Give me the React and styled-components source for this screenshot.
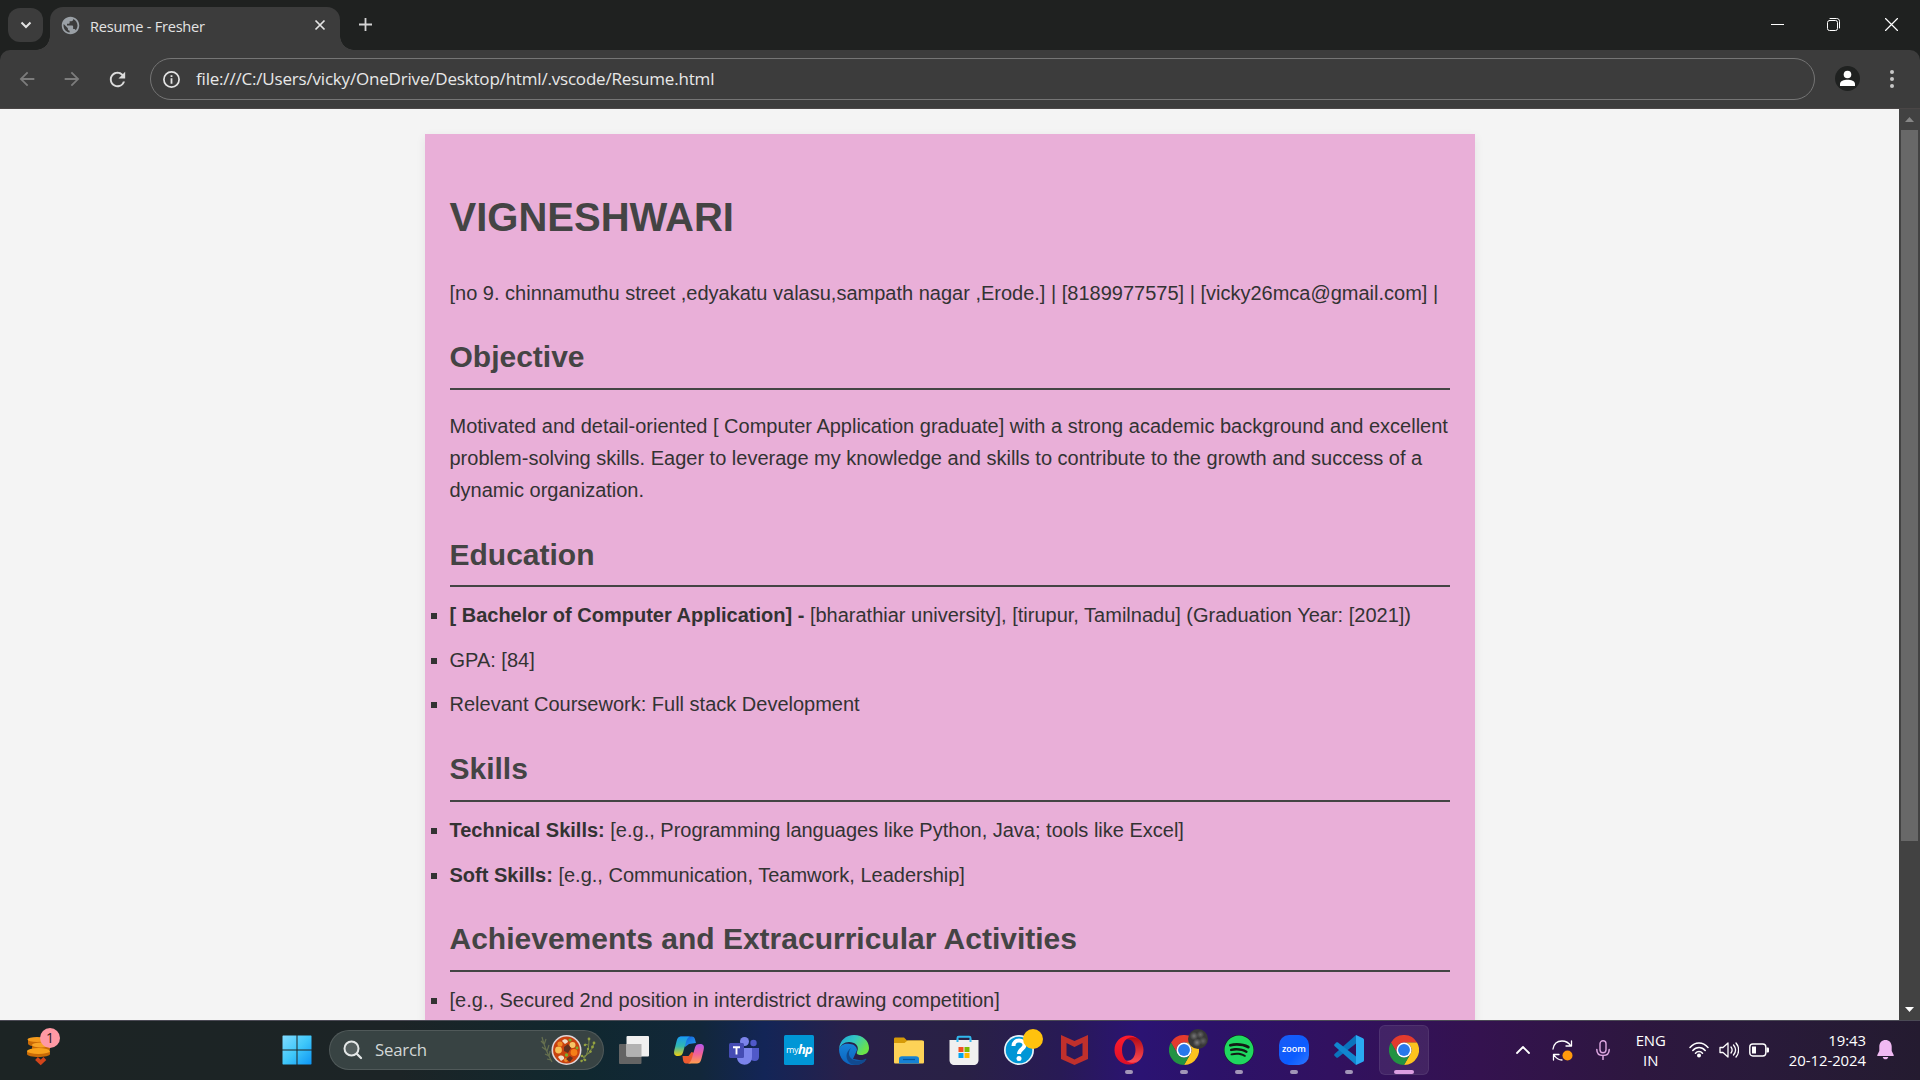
import React from "react";
import styled, { createGlobalStyle } from "styled-components";
import { FaSpotify } from "react-icons/fa";
import { MdPublic, MdRefresh, MdArrowBack, MdArrowForward } from "react-icons/md";

const UI = `"Open Sans", "Noto Sans", sans-serif`;

const GlobalStyle = createGlobalStyle`
  *, *::before, *::after { box-sizing: border-box; }
  html, body { margin: 0; padding: 0; overflow: hidden; }
  svg { display: block; flex: none; }
`;

const Screen = styled.div`
  width: 1920px;
  height: 1080px;
  display: flex;
  flex-direction: column;
  overflow: hidden;
  font-family: ${UI};
`;

/* ---------- browser chrome ---------- */

const TabStrip = styled.header`
  flex: none;
  height: 50px;
  display: flex;
  background: #1f2120;
`;

const TabSearch = styled.button`
  width: 35px;
  height: 34px;
  margin: 8px 7px 0 8px;
  padding: 0;
  border: 0;
  border-radius: 12px;
  background: #3c3c3c;
  display: flex;
  align-items: center;
  justify-content: center;
`;

const Tab = styled.div`
  position: relative;
  width: 290px;
  height: 43px;
  margin-top: 7px;
  padding: 0 13px 7px 10px;
  display: flex;
  align-items: center;
  border-radius: 13px 13px 0 0;
  background: #3c3c3c;

  &::before,
  &::after {
    content: "";
    position: absolute;
    bottom: 0;
    width: 14px;
    height: 14px;
  }
  &::before {
    left: -14px;
    background: radial-gradient(circle at 0 0, transparent 13.5px, #3c3c3c 14px);
  }
  &::after {
    right: -14px;
    background: radial-gradient(circle at 100% 0, transparent 13.5px, #3c3c3c 14px);
  }
`;

const TabTitle = styled.span`
  flex: 1;
  margin-left: 9px;
  padding-top: 1px;
  font-size: 14.6px;
  line-height: 20px;
  letter-spacing: -0.26px;
  color: #e3e3e3;
  white-space: nowrap;
`;

const NewTab = styled.div`
  margin: 18px 0 0 19px;
`;

const WindowControls = styled.div`
  margin-left: auto;
  height: 49px;
  display: flex;
`;

const WindowButton = styled.div`
  width: ${(p) => p.$width}px;
  display: flex;
  align-items: center;
  justify-content: center;
`;

const ToolbarBack = styled.div`
  flex: none;
  height: 59px;
  background: #1f2120;
`;

const Toolbar = styled.div`
  height: 59px;
  padding: 8px 19px 0 4px;
  display: flex;
  align-items: flex-start;
  border-radius: 10px 10px 0 0;
  border-bottom: 1px solid #4a4646;
  background: #3c3c3c;
`;

const NavButton = styled.div`
  width: ${(p) => (p.$active ? 47 : 45)}px;
  height: 42px;
  display: flex;
  align-items: center;
  justify-content: center;
  color: ${(p) => (p.$active ? "#dcdcdc" : "#7c7c7c")};
`;

const AddressBar = styled.div`
  width: 1665px;
  height: 42px;
  margin-left: 9px;
  padding-left: 12px;
  display: flex;
  align-items: center;
  border: 1px solid #757575;
  border-radius: 21px;
  background: #3c3c3c;
`;

const Url = styled.span`
  margin-left: 16px;
  font-size: 17px;
  line-height: 24px;
  letter-spacing: -0.19px;
  color: #e8e8e8;
  white-space: nowrap;
`;

const Profile = styled.div`
  width: 25px;
  height: 25px;
  margin: 8px 0 0 20px;
  border-radius: 50%;
  background: #1f2120;
`;

const MenuDots = styled.div`
  margin: 12px 0 0 30px;
`;

/* ---------- page ---------- */

const Viewport = styled.div`
  flex: none;
  height: 911px;
  display: flex;
  overflow: hidden;
`;

const Page = styled.main`
  width: 1899px;
  height: 911px;
  padding: 25px;
  overflow: hidden;
  background: #f4f4f4;
  color: #333;
  font: 20px/32px "Liberation Sans", Arial, sans-serif;
`;

const Sheet = styled.article`
  width: 1050px;
  height: 1100px;
  margin: 0 auto;
  padding: 25px;
  background: #e9afd8;
  box-shadow: 0 2.5px 10px rgba(0, 0, 0, 0.07);
`;

const Name = styled.h1`
  margin: 26px 0 27.6px;
  font-size: 40px;
  line-height: 64px;
  font-weight: 700;
  color: #444;
`;

const Heading = styled.h2`
  margin: 24.9px 0 12.5px;
  padding-bottom: 6.25px;
  border-bottom: 2px solid #444;
  font-size: 30px;
  line-height: 48px;
  font-weight: 700;
  color: #444;
`;

const Text = styled.p`
  margin: 20px 0;
`;

const Items = styled.ul`
  margin: 0;
  padding: 0;
  list-style: square;
`;

const Item = styled.li`
  margin-bottom: 12.5px;
  white-space: nowrap;
`;

const Scrollbar = styled.div`
  width: 21px;
  height: 911px;
  display: flex;
  flex-direction: column;
  align-items: center;
  justify-content: space-between;
  background: #424242;
`;

const ScrollArrow = styled.div`
  height: 21px;
  display: flex;
  align-items: center;
`;

const Thumb = styled.div`
  width: 17px;
  height: 711px;
  margin-bottom: auto;
  background: #686868;
`;

/* ---------- taskbar ---------- */

const Taskbar = styled.footer`
  flex: none;
  height: 60px;
  display: flex;
  align-items: center;
  box-shadow: inset 0 1px #4b4a55;
  background: linear-gradient(
    90deg,
    #1c2424 0,
    #1c2426 400px,
    #10282f 580px,
    #12273a 700px,
    #132557 765px,
    #29204a 850px,
    #292145 960px,
    #281a55 1060px,
    #2b1373 1140px,
    #2c1269 1210px,
    #311160 1330px,
    #34124f 1480px,
    #2d173f 1640px,
    #291a3a 1760px,
    #241b30 1920px
  );
`;

const Widget = styled.div`
  position: relative;
  width: 40px;
  height: 40px;
  margin-left: 22px;
`;

const Count = styled.span`
  position: absolute;
  left: 18px;
  top: -2px;
  width: 20px;
  height: 20px;
  border-radius: 50%;
  background: #ff99a4;
  color: #2a1a1c;
  font-size: 14px;
  line-height: 20px;
  text-align: center;
`;

const Slot = styled.div`
  position: relative;
  width: 55px;
  height: 60px;
  margin-left: ${(p) => p.$gap || 0}px;
  display: flex;
  align-items: center;
  justify-content: center;
`;

const Tile = styled.div`
  width: 50px;
  height: 50px;
  display: flex;
  align-items: center;
  justify-content: center;
  border-radius: 6px;
  border: 1px solid ${(p) => (p.$active ? "rgba(255,255,255,0.07)" : "transparent")};
  background: ${(p) => (p.$active ? "rgba(255,255,255,0.08)" : "transparent")};
`;

const Running = styled.span`
  position: absolute;
  left: 50%;
  bottom: 6px;
  width: ${(p) => (p.$active ? 20 : 8)}px;
  height: 4px;
  transform: translateX(-50%);
  border-radius: 2px;
  background: ${(p) => (p.$active ? "#dc9ee2" : "#a296b8")};
`;

const Dot = styled.span`
  position: absolute;
  left: 31px;
  top: 9px;
  width: 20px;
  height: 20px;
  border-radius: 50%;
  background: ${(p) => p.$fill};
`;

const SearchBox = styled.div`
  width: 275px;
  height: 40px;
  margin-left: 4.5px;
  padding: 0 6px 0 13px;
  display: flex;
  align-items: center;
  border: 1px solid rgba(255, 255, 255, 0.12);
  border-radius: 20px;
  background: #384343;
`;

const SearchLabel = styled.span`
  flex: 1;
  margin-left: 12px;
  font-size: 16.8px;
  line-height: 24px;
  letter-spacing: -0.2px;
  color: #d3d7d7;
`;

const AppSlots = styled.div`
  display: flex;
  margin-left: 2.5px;
`;

const Tray = styled.div`
  margin-left: auto;
  height: 59px;
  padding-right: 26px;
  display: flex;
  align-items: center;
  color: #fff;
`;

const TrayIcon = styled.div`
  margin-right: ${(p) => p.$gap || 0}px;
`;

const TrayText = styled.div`
  margin-right: ${(p) => p.$gap}px;
  text-align: ${(p) => p.$align};
  font-size: 14.9px;
  line-height: 20px;
  letter-spacing: -0.05px;
  white-space: nowrap;
`;

/* ---------- drawings ---------- */

const Chrome = () => (
  <svg width="30" height="30" viewBox="0 0 48 48">
    <path fill="#e33b2e" d="M24 12H44.8A24 24 0 0 0 3.2 12L13.6 30A12 12 0 0 1 24 12Z" />
    <path fill="#fcc31e" d="M34.4 30L24 48A24 24 0 0 0 44.8 12H24A12 12 0 0 1 34.4 30Z" />
    <path fill="#229342" d="M13.6 30L3.2 12A24 24 0 0 0 24 48L34.4 30A12 12 0 0 1 13.6 30Z" />
    <circle cx="24" cy="24" r="12" fill="#fff" />
    <circle cx="24" cy="24" r="9.5" fill="#2878ea" />
  </svg>
);

const Coins = () => (
  <svg width="40" height="40" viewBox="0 0 40 40">
    <path fill="#c96a06" d="M6 9.500v4c0 4 17 4 17 0v-4zM10 15v4c0 4 18 4 18 0v-4zM5 21v3c0 4 23 4 23 0v-3z" />
    <ellipse cx="15" cy="9.500" rx="9.500" ry="2.600" fill="#f59b1c" />
    <ellipse cx="19" cy="15" rx="9" ry="2.600" fill="#f7a325" />
    <ellipse cx="16.500" cy="21" rx="11.500" ry="3" fill="#f8a11b" />
    <path fill="none" stroke="#d2451b" strokeWidth="4" d="M14.500 28.500l4.200 4 4.200-4" />
  </svg>
);

const WindowsLogo = () => (
  <svg width="30" height="30" viewBox="0 0 30 30">
    <defs>
      <linearGradient id="win" x1="0" y1="0" x2="30" y2="30" gradientUnits="userSpaceOnUse">
        <stop offset="0" stopColor="#84dcff" />
        <stop offset=".5" stopColor="#40c8fa" />
        <stop offset="1" stopColor="#0b94f5" />
      </linearGradient>
    </defs>
    <path fill="url(#win)" d="M1 .5h13.500v14H.5V1zM15.500.5H29l.5.5v13.500h-14zM.5 15.500h14v14H1l-.5-.5zM15.500 15.500h14V29l-.5.500H15.500z" />
  </svg>
);

const Soup = () => (
  <svg width="58" height="36" viewBox="0 0 58 36">
    <g fill="none" stroke="#66704f" strokeWidth="1.200">
      <path d="M3 5c2 9 5 16 10 25M5 12L2 9M5 13l2-6M7 18l-4-3M8 19l2-6M10 24l-4-2M10 25l1-6M12 28l-4-1" />
    </g>
    <g fill="none" stroke="#7c8a48" strokeWidth="1">
      <path d="M43 29c5-5 7-12 7-22M44 25l8-5M49 13l-3-1M55 11c-1 5-5 10-11 15" />
    </g>
    <g fill="#93a13f">
      <circle cx="50" cy="7" r="1.400" /><circle cx="55" cy="11" r="1.400" /><circle cx="53.500" cy="15" r="1.400" />
      <circle cx="46" cy="13" r="1.300" /><circle cx="43" cy="24" r="1.300" /><circle cx="51.500" cy="19.500" r="1.300" />
      <circle cx="46" cy="28" r="1.300" /><circle cx="42.500" cy="29" r="1.200" /><circle cx="49" cy="17" r="1.200" />
    </g>
    <circle cx="27.500" cy="18" r="15" fill="#e0d6da" />
    <circle cx="27.500" cy="18" r="13.400" fill="#c8420f" />
    <circle cx="19.500" cy="18" r="3.400" fill="#f7bf55" />
    <circle cx="33.500" cy="13" r="3" fill="#f6c566" />
    <circle cx="35" cy="20.500" r="3.400" fill="#f57f17" />
    <circle cx="21" cy="12" r="2.600" fill="#f08a24" />
    <circle cx="27" cy="28" r="2" fill="#ee8a2a" />
    <path fill="#61301f" d="M25 15l4-3 3 4-3 5-4-2zM27 27l4-3 3 2-3 4z" />
    <path fill="#f0dfca" d="M23 9c2-3 6-2 6 1l-3 2zM19 25c3-3 7-1 6 2l-3 2z" />
    <circle cx="31" cy="8" r="1.600" fill="#75a82c" />
    <circle cx="27.500" cy="23" r="1.700" fill="#7aad2a" />
    <circle cx="38" cy="16" r="1.400" fill="#7aad2a" />
  </svg>
);

const TaskView = () => (
  <svg width="30" height="30" viewBox="0 0 30 30">
    <rect x="0" y="9" width="22.500" height="20" rx="1" fill="#646464" />
    <rect x="7.500" y="1" width="22.500" height="20.500" rx="1" fill="#f0f0f0" />
    <rect x="7.500" y="9" width="15" height="12.500" fill="#b2b2b2" />
  </svg>
);

const Copilot = () => (
  <svg width="32" height="30" viewBox="0 0 32 30">
    <defs>
      <linearGradient id="cpA" x1="0" y1="0" x2="0" y2="1">
        <stop offset="0" stopColor="#199bf2" /><stop offset=".5" stopColor="#32b8b0" /><stop offset="1" stopColor="#f2cf0d" />
      </linearGradient>
      <linearGradient id="cpB" x1="0" y1="0" x2="0" y2="1">
        <stop offset="0" stopColor="#b657ea" /><stop offset=".5" stopColor="#f0609a" /><stop offset="1" stopColor="#ff9e4e" />
      </linearGradient>
      <linearGradient id="cpC" x1="0" y1="0" x2="1" y2="1">
        <stop offset="0" stopColor="#0d4fd6" /><stop offset="1" stopColor="#29a7f2" />
      </linearGradient>
    </defs>
    <path fill="url(#cpC)" d="M7 1.500h12c3 0 3 3 4 6.500l-7 1-4 3z" />
    <path fill="#ed5b30" d="M9.500 21h6l3-4 3 1-4 10.500H13c-3 0-3-4-3.500-7.500z" />
    <path fill="url(#cpA)" d="M9 1.500h8c-3 1-3.500 4-5 9l-2 7c-.7 2.500-2 3.500-5 3.500-4 0-4.500-2.500-3.500-6.500l2-8c1-4 2-5 5.500-5z" />
    <path fill="url(#cpB)" d="M23 28.500h-8c3-1 3.500-4 5-9l2-7c.7-2.500 2-3.500 5-3.500 4 0 4.500 2.500 3.500 6.500l-2 8c-1 4-2 5-5.500 5z" />
  </svg>
);

const Teams = () => (
  <svg width="30" height="30" viewBox="0 0 30 30">
    <circle cx="15.500" cy="6.500" r="4.500" fill="#7b83eb" />
    <circle cx="24.500" cy="8" r="3.200" fill="#5059c9" />
    <path fill="#5059c9" d="M20 13h10v9c0 4-4 5-8 3z" />
    <path fill="#7b83eb" d="M8 13h15v9c0 10-14 10-15 1z" />
    <rect x="0" y="8" width="15" height="15" rx="1.500" fill="#454cb4" />
    <path fill="none" stroke="#fff" strokeWidth="1.900" d="M4 12.200h7M7.500 12.200v7.300" />
  </svg>
);

const MyHpTile = styled.div`
  width: 30px;
  height: 30px;
  border-radius: 1.5px;
  background: #0096d6;
  color: #fff;
  font: 9px/30px ${UI};
  display: flex;
  justify-content: center;
  letter-spacing: -0.4px;

  b {
    font: italic 700 13px/29px ${UI};
    letter-spacing: -0.8px;
  }
`;

const Edge = () => (
  <svg width="30" height="30" viewBox="0 0 30 30">
    <defs>
      <linearGradient id="edA" x1="0" y1="0" x2="1" y2=".5">
        <stop offset="0" stopColor="#1ba5dc" /><stop offset=".5" stopColor="#34c7c2" /><stop offset="1" stopColor="#6be348" />
      </linearGradient>
      <linearGradient id="edB" x1="0" y1="0" x2="0" y2="1">
        <stop offset="0" stopColor="#1682d8" /><stop offset="1" stopColor="#0c63bd" />
      </linearGradient>
    </defs>
    <path fill="url(#edB)" d="M0 14C2 9 7 8 11 9c4 0 7 3 7 6l-4 9 12 2c-3 3-7 4-11 4C6 30 0 23 0 14z" />
    <path fill="#114a8f" d="M12 13c-6 8 2 16 14 11 1-.5 2 0 1 1-4 5-10 6-15 4-6-4-6-12 0-16z" />
    <path fill="url(#edA)" d="M0 14C1 5 7 0 15 0c9 0 15 6 15 13 0 5-4 7-8 7-3 0-5-1-4-3 3-6-2-10-8-10-5 0-8 3-10 7z" />
  </svg>
);

const Folder = () => (
  <svg width="30" height="30" viewBox="0 0 30 30">
    <path fill="#d69a08" d="M0 4c0-1 .5-1.500 1.500-1.500H10l3 3h15v9H0z" />
    <path fill="#fdd257" d="M0 8h10.500l3-2.500h15c1 0 1.500.5 1.500 1.500v20c0 1-.5 1.500-1.500 1.500h-27C.5 28.500 0 28 0 27z" />
    <path fill="#1682d4" d="M5 28.500V24c0-2 1-2.800 3-2.800h14c2 0 3 .8 3 2.800v4.500z" />
    <path stroke="#07559b" strokeWidth="1.200" d="M9 24.500h12" />
  </svg>
);

const Store = () => (
  <svg width="30" height="30" viewBox="0 0 30 30">
    <path fill="none" stroke="#31b7ed" strokeWidth="2" d="M8.500 7V3c0-1 .5-1.300 1.300-1.300h10.400c.8 0 1.300.3 1.300 1.300v4" />
    <path fill="#f0f0f0" d="M.5 5h29v20c0 3-2 5-5 5h-19c-3 0-5-2-5-5z" />
    <path fill="none" stroke="#31b7ed" strokeWidth="2" d="M8.500 4.500V7M21.500 4.500V7" />
    <path fill="#f25022" d="M9.500 12h5v5h-5z" /><path fill="#7fba00" d="M15.500 12h5v5h-5z" />
    <path fill="#00a4ef" d="M9.500 18h5v5h-5z" /><path fill="#ffb900" d="M15.500 18h5v5h-5z" />
  </svg>
);

const Help = () => (
  <svg width="30" height="30" viewBox="0 0 30 30">
    <circle cx="15" cy="15" r="15" fill="#e9f3f8" />
    <circle cx="15" cy="15" r="13.300" fill="#0096d6" />
    <path fill="none" stroke="#fff" strokeWidth="4" d="M9.500 11c0-4 3-5.500 5.500-5.500 3 0 5.500 1.500 5.500 4.500 0 4-5.500 4-5.500 9" />
    <circle cx="15" cy="23.500" r="2.500" fill="#fff" />
  </svg>
);

const Shield = () => (
  <svg width="27" height="30" viewBox="0 0 27 30">
    <path fill="#c0302c" fillRule="evenodd" d="M0 0l13.500 6L27 0v24l-13.500 6L0 24zM5.500 8v12.500l8 4 8-4V8l-8 4z" />
  </svg>
);

const Opera = () => (
  <svg width="30" height="30" viewBox="0 0 30 30">
    <defs>
      <linearGradient id="opA" x1="0" y1="0" x2="0" y2="1">
        <stop offset="0" stopColor="#ff1b2d" /><stop offset="1" stopColor="#dc1028" />
      </linearGradient>
      <linearGradient id="opB" x1="0" y1="0" x2="0" y2="1">
        <stop offset="0" stopColor="#b00814" /><stop offset="1" stopColor="#ff5058" />
      </linearGradient>
    </defs>
    <path
      fill="url(#opB)"
      fillRule="evenodd"
      d="M10 4.800C19-3 29.500 4 29.500 15S19 33 10 25.200c7 2.500 11.500-3 11.500-10.200S17 2.300 10 4.800z"
    />
    <path
      fill="url(#opA)"
      fillRule="evenodd"
      d="M15 .5C6.500.5.500 7 .500 15S6.500 29.500 15 29.500c3.500 0 6-1.200 8-3-8 4-15-2-15-11.500S15-.5 23 3.500C21 1.500 18.500.5 15 .5z"
    />
  </svg>
);

const SpotifyDisc = styled.div`
  width: 30px;
  height: 30px;
  border-radius: 50%;
  background: #131a15;
  color: #1fd760;
`;

const ZoomTile = styled.div`
  width: 30px;
  height: 30px;
  border-radius: 10px;
  background: linear-gradient(135deg, #1a5cf5, #0b5cff 60%, #2f78ff);
  color: #fff;
  font: 600 9px/28px ${UI};
  text-align: center;
`;

const VsCode = () => (
  <svg width="30" height="30" viewBox="0 0 30 30">
    <path fill="#0b74bd" d="M22 0v8.500L4 22.500c-.7.500-1.200.4-1.700 0L.5 20.800c-.5-.6-.5-1.200 0-1.800z" />
    <path fill="#1187cf" d="M22 30v-8.500L4 7.500C3.300 7 2.800 7.100 2.300 7.500L.5 9.200C0 9.800 0 10.400.500 11z" />
    <path fill="#2aa9f2" d="M22 0l7 3.200c.7.300 1 .9 1 1.600v20.400c0 .7-.3 1.300-1 1.600L22 30z" />
  </svg>
);

const stroke = { fill: "none", stroke: "currentColor", strokeLinecap: "round", strokeLinejoin: "round" };

const PHOTO_DOT = `
  radial-gradient(circle at 30% 35%, #777 0, transparent 22%),
  radial-gradient(circle at 62% 28%, #6a6a6a 0, transparent 20%),
  radial-gradient(circle at 45% 68%, #808080 0, transparent 24%),
  radial-gradient(circle at 75% 60%, #666 0, transparent 22%),
  #383838`;

const APPS = [
  { id: "task-view", icon: <TaskView /> },
  { id: "copilot", icon: <Copilot /> },
  { id: "teams", icon: <Teams /> },
  { id: "myhp", icon: <MyHpTile>my<b>hp</b></MyHpTile> },
  { id: "edge", icon: <Edge /> },
  { id: "explorer", icon: <Folder /> },
  { id: "store", icon: <Store /> },
  { id: "help", icon: <Help />, dot: "#ffc20e" },
  { id: "mcafee", icon: <Shield /> },
  { id: "opera", icon: <Opera />, running: true },
  { id: "chrome-profile", icon: <Chrome />, dot: PHOTO_DOT, running: true },
  { id: "spotify", icon: <SpotifyDisc><FaSpotify size={30} /></SpotifyDisc>, running: true },
  { id: "zoom", icon: <ZoomTile>zoom</ZoomTile>, running: true },
  { id: "vscode", icon: <VsCode />, running: true },
  { id: "chrome", icon: <Chrome />, running: true, active: true },
];

export default function App() {
  return (
    <Screen>
      <GlobalStyle />
      <TabStrip>
        <TabSearch>
          <svg width="12" height="8" viewBox="0 0 12 8" color="#e3e3e3">
            <path {...stroke} strokeWidth="2" strokeLinecap="butt" strokeLinejoin="miter" d="M1.500 1.500L6 6l4.500-4.500" />
          </svg>
        </TabSearch>
        <Tab>
          <MdPublic size={21} color="#9aa0a6" />
          <TabTitle>Resume - Fresher</TabTitle>
          <svg width="14" height="14" viewBox="0 0 14 14" color="#e3e3e3">
            <path {...stroke} strokeWidth="1.700" strokeLinecap="butt" d="M2.500 2.500l9 9M11.500 2.500l-9 9" />
          </svg>
        </Tab>
        <NewTab>
          <svg width="13" height="13" viewBox="0 0 13 13" color="#d4d4d4">
            <path {...stroke} strokeWidth="1.800" strokeLinecap="butt" d="M6.500 0v13M0 6.500h13" />
          </svg>
        </NewTab>
        <WindowControls>
          <WindowButton $width={53}>
            <svg width="13" height="1" viewBox="0 0 13 1"><path fill="#fff" d="M0 0h13v1H0z" /></svg>
          </WindowButton>
          <WindowButton $width={59}>
            <svg width="13" height="13" viewBox="0 0 13 13" color="#fff">
              <rect {...stroke} x=".5" y="2.500" width="10" height="10" rx="2" />
              <path {...stroke} d="M3 .5h6.500c2 0 3 1 3 3V10" />
            </svg>
          </WindowButton>
          <WindowButton $width={57}>
            <svg width="13" height="13" viewBox="0 0 13 13" color="#fff">
              <path {...stroke} strokeWidth="1.200" d="M.5.5l12 12M12.500.5l-12 12" />
            </svg>
          </WindowButton>
        </WindowControls>
      </TabStrip>

      <ToolbarBack>
        <Toolbar>
          <NavButton><MdArrowBack size={22} /></NavButton>
          <NavButton><MdArrowForward size={22} /></NavButton>
          <NavButton $active><MdRefresh size={23} /></NavButton>
          <AddressBar>
            <svg width="17" height="17" viewBox="0 0 17 17" color="#e3e3e3">
              <circle {...stroke} strokeWidth="1.700" cx="8.500" cy="8.500" r="7.600" />
              <path fill="currentColor" d="M7.600 4.200h1.800V6H7.600zM7.600 7.300h1.800v5.500H7.600z" />
            </svg>
            <Url>file:///C:/Users/vicky/OneDrive/Desktop/html/.vscode/Resume.html</Url>
          </AddressBar>
          <Profile>
            <svg width="25" height="25" viewBox="0 0 25 25">
              <circle cx="12.500" cy="8.500" r="3.800" fill="#fff" />
              <path fill="#fff" d="M5 20v-2c0-3 4-4.200 7.500-4.200S20 15 20 18v2z" />
            </svg>
          </Profile>
          <MenuDots>
            <svg width="4" height="18" viewBox="0 0 4 18" fill="#c7c7c7">
              <circle cx="2" cy="2" r="2" /><circle cx="2" cy="9" r="2" /><circle cx="2" cy="16" r="2" />
            </svg>
          </MenuDots>
        </Toolbar>
      </ToolbarBack>

      <Viewport>
        <Page>
          <Sheet>
            <Name>VIGNESHWARI</Name>
            <Text>[no 9. chinnamuthu street ,edyakatu valasu,sampath nagar ,Erode.] | [8189977575] | [vicky26mca@gmail.com] |</Text>
            <Heading>Objective</Heading>
            <Text>
              Motivated and detail-oriented [ Computer Application graduate] with a strong academic background and
              excellent problem-solving skills. Eager to leverage my knowledge and skills to contribute to the growth
              and success of a dynamic organization.
            </Text>
            <Heading>Education</Heading>
            <Items>
              <Item><strong>[ Bachelor of Computer Application] -</strong> [bharathiar university], [tirupur, Tamilnadu] (Graduation Year: [2021])</Item>
              <Item>GPA: [84]</Item>
              <Item>Relevant Coursework: Full stack Development</Item>
            </Items>
            <Heading>Skills</Heading>
            <Items>
              <Item><strong>Technical Skills:</strong> [e.g., Programming languages like Python, Java; tools like Excel]</Item>
              <Item><strong>Soft Skills:</strong> [e.g., Communication, Teamwork, Leadership]</Item>
            </Items>
            <Heading>Achievements and Extracurricular Activities</Heading>
            <Items>
              <Item>[e.g., Secured 2nd position in interdistrict drawing competition]</Item>
            </Items>
          </Sheet>
        </Page>
        <Scrollbar>
          <ScrollArrow>
            <svg width="9" height="5" viewBox="0 0 9 5"><path fill="#868686" d="M4.500 0L9 5H0z" /></svg>
          </ScrollArrow>
          <Thumb />
          <ScrollArrow>
            <svg width="9" height="5" viewBox="0 0 9 5"><path fill="#fff" d="M4.500 5L0 0h9z" /></svg>
          </ScrollArrow>
        </Scrollbar>
      </Viewport>

      <Taskbar>
        <Widget>
          <Coins />
          <Count>1</Count>
        </Widget>
        <Slot $gap={207.5}><WindowsLogo /></Slot>
        <SearchBox>
          <svg width="20" height="20" viewBox="0 0 20 20" color="#e4e7e7">
            <circle cx="8.500" cy="8.500" r="7" fill="rgba(255,255,255,.15)" stroke="currentColor" strokeWidth="2" />
            <path {...stroke} strokeWidth="2.300" d="M14 14l4 4" />
          </svg>
          <SearchLabel>Search</SearchLabel>
          <Soup />
        </SearchBox>
        <AppSlots>
          {APPS.map((app) => (
            <Slot key={app.id}>
              <Tile $active={app.active}>{app.icon}</Tile>
              {app.dot && <Dot $fill={app.dot} />}
              {app.running && <Running $active={app.active} />}
            </Slot>
          ))}
        </AppSlots>
        <Tray>
          <TrayIcon $gap={22}>
            <svg width="14" height="8" viewBox="0 0 14 8"><path {...stroke} strokeWidth="1.800" d="M1 7l6-6 6 6" /></svg>
          </TrayIcon>
          <TrayIcon $gap={23}>
            <svg width="21" height="21" viewBox="0 0 21 21">
              <path {...stroke} strokeWidth="1.300" d="M1 9C2 3 6 1 10 1c4 0 7 2 9 5M19.500 1v5H14M1.500 20v-5.500H7M2 15c2 3 4 5 8 5" />
              <circle cx="15.500" cy="15.500" r="5" fill="#ff9a0c" />
            </svg>
          </TrayIcon>
          <TrayIcon $gap={26}>
            <svg width="14" height="20" viewBox="0 0 14 20" color="#dda6e0">
              <rect {...stroke} strokeWidth="1.400" x="4" y=".8" width="6" height="12" rx="3" />
              <path {...stroke} strokeWidth="1.500" d="M.8 9.500c0 4 2.500 6 6.200 6s6.200-2 6.200-6M7 16v3.500" />
            </svg>
          </TrayIcon>
          <TrayText $gap={23} $align="center">ENG<br />IN</TrayText>
          <TrayIcon $gap={10}>
            <svg width="20" height="16" viewBox="0 0 20 16">
              <path {...stroke} strokeWidth="1.500" d="M1 5.500c5-6 13-6 18 0M3.800 8.500c3.500-4 9-4 12.400 0M6.500 11.300c2-2.300 5-2.300 7 0" />
              <circle cx="10" cy="13.500" r="2" fill="#fff" />
            </svg>
          </TrayIcon>
          <TrayIcon $gap={10}>
            <svg width="20" height="18" viewBox="0 0 20 18">
              <path {...stroke} strokeWidth="1.300" d="M1 6.500h3L9 2v14l-5-4.500H1zM12 6c1.500 2 1.500 4 0 6M14.500 4c2.500 3 2.500 7 0 10M17 2c3.500 4 3.500 10 0 14" />
            </svg>
          </TrayIcon>
          <TrayIcon $gap={20}>
            <svg width="20" height="14" viewBox="0 0 20 14">
              <rect {...stroke} strokeWidth="1.400" x=".8" y="1" width="16" height="12" rx="3" />
              <path fill="#fff" d="M3 3.500h4v7H3zM17.500 4.500h1.200c.8 0 1.300.5 1.300 1.300v2.400c0 .8-.5 1.300-1.300 1.300h-1.200z" />
            </svg>
          </TrayIcon>
          <TrayText $gap={11} $align="right">19:43<br />20-12-2024</TrayText>
          <TrayIcon>
            <svg width="17" height="20" viewBox="0 0 17 20" fill="#f0b9f2">
              <path d="M8.500 0C5 0 2.300 2.700 2.300 6.500V11L.3 15c-.2.500 0 1 .6 1h15.200c.6 0 .8-.5.6-1l-2-4V6.500C14.700 2.700 12 0 8.500 0zM5.700 17h5.600c-.4 1.500-1.500 2.300-2.800 2.300S6.100 18.500 5.700 17z" />
            </svg>
          </TrayIcon>
        </Tray>
      </Taskbar>
    </Screen>
  );
}
